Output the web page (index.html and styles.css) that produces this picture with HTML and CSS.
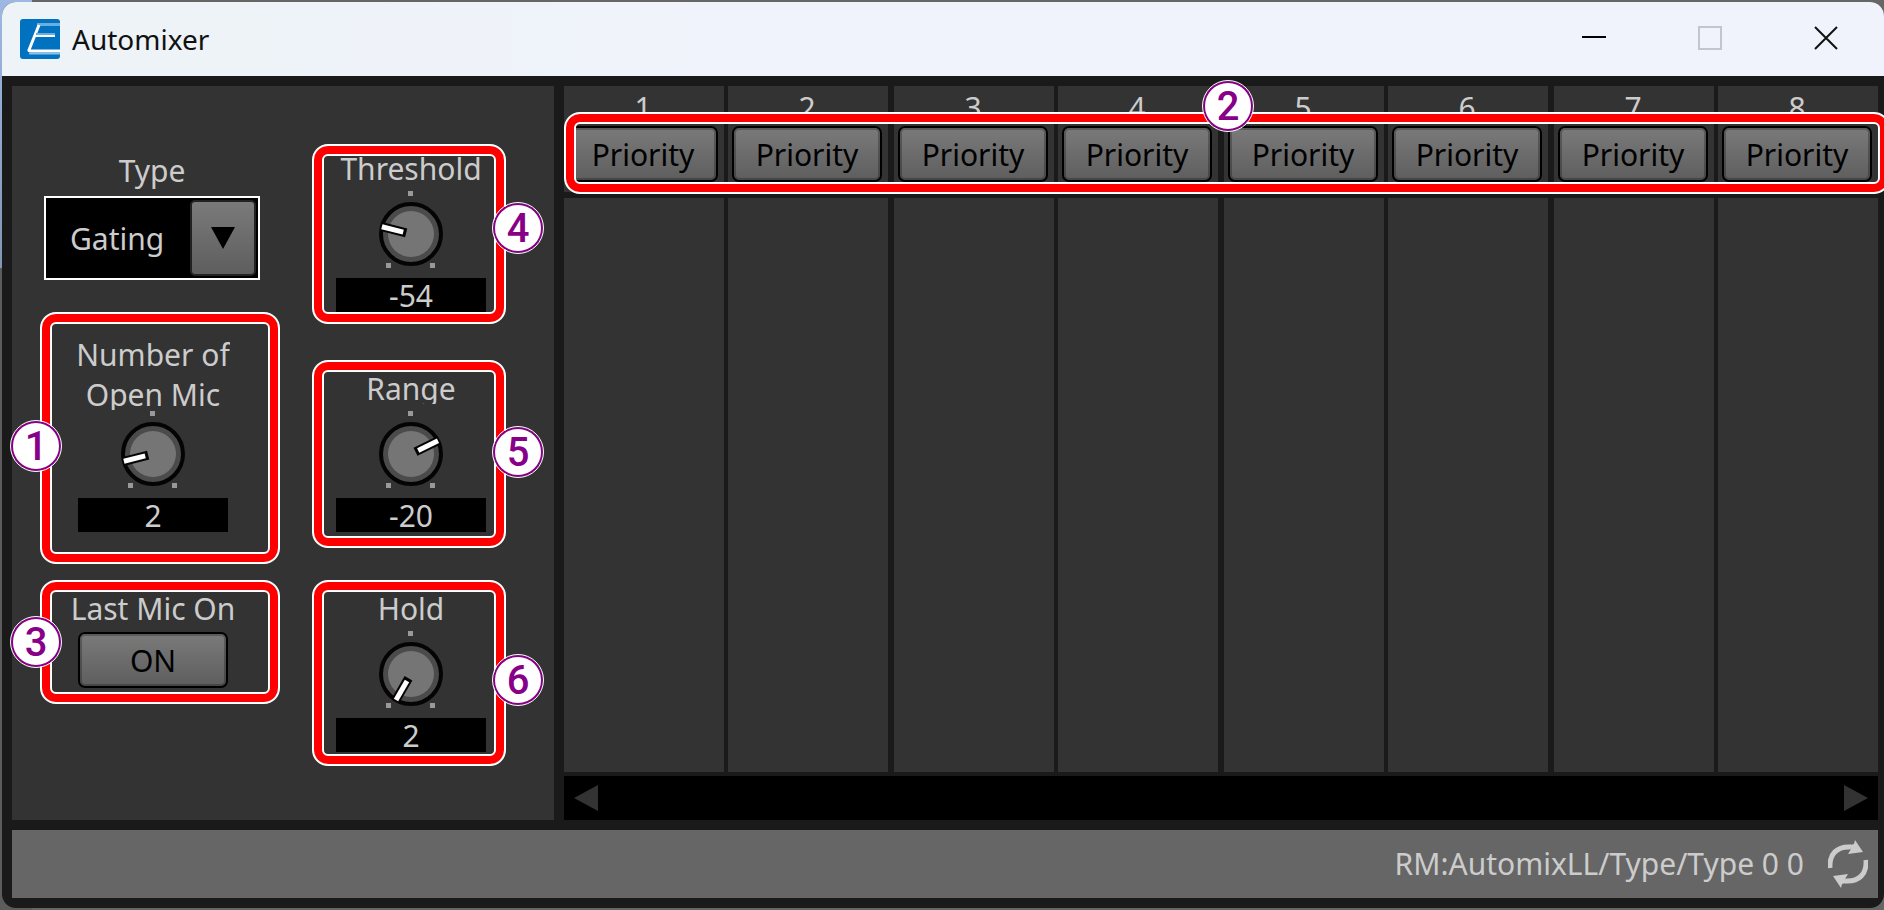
FILE: index.html
```html
<!DOCTYPE html>
<html lang="en">
<head>
    <meta charset="UTF-8">
    <meta name="viewport" content="width=device-width, initial-scale=1.0">
    <title>Automixer</title>
    <link rel="stylesheet" href="styles.css">
</head>
<body>
    <!-- Shared dial drawing, the pointer is added per knob -->
    <svg class="defs" aria-hidden="true">
        <symbol id="dial" viewBox="0 0 150 94">
            <rect x="72" y="7" width="5" height="5" fill="#999" />
            <rect x="50" y="79" width="5" height="5" fill="#999" />
            <rect x="94" y="79" width="5" height="5" fill="#999" />
            <circle cx="75" cy="50" r="30" fill="#4b4b4b" stroke="#050303" stroke-width="4" />
            <circle cx="75" cy="50" r="23" fill="#757575" />
        </symbol>
        <symbol id="pointer" viewBox="0 0 150 94">
            <rect x="70.500" y="21" width="9" height="24" fill="#050303" />
            <rect x="72.500" y="20" width="5" height="22" fill="#fff" />
        </symbol>
    </svg>

    <div class="window">
        <header class="titlebar">
            <svg class="logo" viewBox="0 0 40 40" aria-hidden="true">
                <rect width="40" height="40" rx="3" fill="#0072c0" />
                <path d="M17 5.500H40" stroke="#6aaedd" stroke-width="3" fill="none" />
                <path d="M19 6L9 31Q8.500 32 11 32H40" stroke="#fff" stroke-width="3" fill="none" />
                <path d="M16 15H35" stroke="#6aaedd" stroke-width="2" fill="none" />
                <path d="M15 17H35" stroke="#fff" stroke-width="2" fill="none" />
                <path d="M9 34.500H40" stroke="#8cc2e6" stroke-width="2" fill="none" />
            </svg>
            <h1>Automixer</h1>
            <div class="window-controls">
                <button type="button" aria-label="Minimize">
                    <svg viewBox="0 0 24 24"><path d="M0 11H24" stroke="#000" stroke-width="2" /></svg>
                </button>
                <button type="button" aria-label="Maximize" disabled>
                    <svg viewBox="0 0 24 24"><rect x="1" y="1" width="22" height="22" fill="none" stroke="#c3c5ca" stroke-width="2" /></svg>
                </button>
                <button type="button" aria-label="Close">
                    <svg viewBox="0 0 24 24"><path d="M1 1L23 23M23 1L1 23" stroke="#111" stroke-width="2" /></svg>
                </button>
            </div>
        </header>

        <main class="content">
            <section class="settings">
                <div class="settings-column">
                    <div class="field">
                        <label class="caption" for="type">Type</label>
                        <div class="select-box">
                            <select id="type">
                                <option>Gating</option>
                            </select>
                            <span class="select-arrow">
                                <svg viewBox="0 0 24 22"><path d="M0 0H24L12 22Z" /></svg>
                            </span>
                        </div>
                    </div>

                    <div class="control control-mics">
                        <label class="caption caption-double" for="mics">Number of<br>Open Mic</label>
                        <div class="knob">
                            <svg viewBox="0 0 150 94">
                                <use href="#dial" />
                                <use href="#pointer" transform="rotate(-104 75 50)" />
                            </svg>
                            <input type="range" id="mics" min="1" max="8" value="2">
                        </div>
                        <output class="value" for="mics">2</output>
                        <div class="callout callout-1"><span class="badge">1</span></div>
                    </div>

                    <div class="control">
                        <span class="caption" id="lastMic">Last Mic On</span>
                        <button type="button" class="btn btn-on" aria-describedby="lastMic">ON</button>
                        <div class="callout callout-3"><span class="badge">3</span></div>
                    </div>
                </div>

                <div class="settings-column">
                    <div class="control">
                        <label class="caption" for="threshold">Threshold</label>
                        <div class="knob">
                            <svg viewBox="0 0 150 94">
                                <use href="#dial" />
                                <use href="#pointer" transform="rotate(-76 75 50)" />
                            </svg>
                            <input type="range" id="threshold" min="-72" max="0" value="-54">
                        </div>
                        <output class="value" for="threshold">-54</output>
                        <div class="callout callout-4"><span class="badge">4</span></div>
                    </div>

                    <div class="control">
                        <label class="caption caption-clip" for="range">Range</label>
                        <div class="knob">
                            <svg viewBox="0 0 150 94">
                                <use href="#dial" />
                                <use href="#pointer" transform="rotate(64 75 50)" />
                            </svg>
                            <input type="range" id="range" min="-70" max="0" value="-20">
                        </div>
                        <output class="value" for="range">-20</output>
                        <div class="callout callout-5"><span class="badge">5</span></div>
                    </div>

                    <div class="control">
                        <label class="caption" for="hold">Hold</label>
                        <div class="knob">
                            <svg viewBox="0 0 150 94">
                                <use href="#dial" />
                                <use href="#pointer" transform="rotate(-150 75 50)" />
                            </svg>
                            <input type="range" id="hold" min="2" max="2000" value="2">
                        </div>
                        <output class="value" for="hold">2</output>
                        <div class="callout callout-6"><span class="badge">6</span></div>
                    </div>
                </div>
            </section>

            <section class="mixer">
                <div class="channels">
                    <div class="pair">
                        <div class="channel">
                            <div class="channel-head"><span>1</span><button type="button" class="btn">Priority</button></div>
                            <div class="channel-body"></div>
                        </div>
                        <div class="channel">
                            <div class="channel-head"><span>2</span><button type="button" class="btn">Priority</button></div>
                            <div class="channel-body"></div>
                        </div>
                    </div>
                    <div class="pair">
                        <div class="channel">
                            <div class="channel-head"><span>3</span><button type="button" class="btn">Priority</button></div>
                            <div class="channel-body"></div>
                        </div>
                        <div class="channel">
                            <div class="channel-head"><span>4</span><button type="button" class="btn">Priority</button></div>
                            <div class="channel-body"></div>
                        </div>
                    </div>
                    <div class="pair">
                        <div class="channel">
                            <div class="channel-head"><span>5</span><button type="button" class="btn">Priority</button></div>
                            <div class="channel-body"></div>
                        </div>
                        <div class="channel">
                            <div class="channel-head"><span>6</span><button type="button" class="btn">Priority</button></div>
                            <div class="channel-body"></div>
                        </div>
                    </div>
                    <div class="pair">
                        <div class="channel">
                            <div class="channel-head"><span>7</span><button type="button" class="btn">Priority</button></div>
                            <div class="channel-body"></div>
                        </div>
                        <div class="channel">
                            <div class="channel-head"><span>8</span><button type="button" class="btn">Priority</button></div>
                            <div class="channel-body"></div>
                        </div>
                    </div>
                </div>
                <div class="scrollbar">
                    <button type="button" aria-label="Scroll left">
                        <svg viewBox="0 0 24 26"><path d="M24 0V26L0 13Z" /></svg>
                    </button>
                    <button type="button" aria-label="Scroll right">
                        <svg viewBox="0 0 24 26"><path d="M0 0V26L24 13Z" /></svg>
                    </button>
                </div>
                <div class="callout callout-2"><span class="badge">2</span></div>
            </section>
        </main>

        <footer class="statusbar">
            <span>RM:AutomixLL/Type/Type 0 0</span>
            <svg viewBox="0 0 40 48" aria-hidden="true">
                <path d="M2 28C1 14 9 6 23 7" fill="none" stroke="#ccc" stroke-width="5" />
                <path d="M27 0L35 12L20 14L23 9L22 5L26 4Z" fill="#ccc" />
                <path d="M38 20C39 34 31 42 17 41" fill="none" stroke="#ccc" stroke-width="5" />
                <path d="M13 48L5 36L20 34L17 39L18 43L14 44Z" fill="#ccc" />
            </svg>
        </footer>
    </div>
</body>
</html>
```

FILE: styles.css
```css
* {
    box-sizing: border-box;
}

/* General Styling */
body {
    margin: 0;
    padding: 2px 0 2px 2px;
    min-height: 100vh;
    display: flex;
    overflow: hidden;
    font-family: "Noto Sans", sans-serif;
    font-size: 30px;
    line-height: 40px;
    color: #ccc;
    background: linear-gradient(#9db8e2, #8296b4 268px, #5c5c5c 268px) left / 32px 100% no-repeat #666;
}

button, select, input {
    font: inherit;
    margin: 0;
}

.defs {
    position: absolute;
    width: 0;
    height: 0;
}

/* Window */
.window {
    flex: 1;
    min-width: 0;
    display: flex;
    flex-direction: column;
    overflow: hidden;
    border-radius: 14px;
    background-color: #1a1a1a;
}

.titlebar {
    display: flex;
    align-items: center;
    height: 74px;
    padding-left: 18px;
    background: linear-gradient(90deg, #edf3f7, #f0f3fb 40%);
}

.logo {
    width: 40px;
    height: 40px;
    margin-right: 12px;
}

h1 {
    margin: 0;
    flex: 1;
    font-size: 28px;
    font-weight: 400;
    color: #111;
}

.window-controls {
    display: flex;
    align-self: stretch;
}

.window-controls button {
    display: flex;
    align-items: center;
    justify-content: center;
    width: 116px;
    padding: 0 0 2px;
    border: 0;
    background: none;
}

.window-controls svg {
    width: 24px;
    height: 24px;
}

/* Content */
.content {
    flex: 1;
    display: flex;
    gap: 10px;
    padding: 10px 6px 10px 10px;
}

.settings {
    display: grid;
    grid-template-columns: 218px 150px;
    column-gap: 74px;
    width: 542px;
    padding: 62px 0 0 32px;
    background-color: #333;
}

.field {
    width: 216px;
    padding-top: 2px;
}

.caption {
    display: block;
    height: 36px;
    padding-top: 1px;
    text-align: center;
    white-space: nowrap;
}

/* The descenders end at the dial */
.caption-clip,
.caption-double {
    overflow: hidden;
}

.caption-double {
    height: 76px;
    margin-bottom: -6px;
}

.select-box {
    position: relative;
    margin-top: 10px;
}

.select-box select {
    appearance: none;
    display: block;
    width: 100%;
    height: 84px;
    padding: 2px 70px 0 24px;
    border: 2px solid #fff;
    border-radius: 0;
    background-color: #000;
    color: #ccc;
}

.select-arrow {
    position: absolute;
    top: 4px;
    right: 4px;
    bottom: 4px;
    width: 66px;
    display: flex;
    align-items: center;
    justify-content: center;
    border: 2px solid #222;
    border-radius: 5px;
    background: linear-gradient(#7a7a7a, #5e5e5e);
    pointer-events: none;
}

.select-arrow svg {
    width: 24px;
    height: 22px;
}

/* Knobs and buttons */
.control {
    position: relative;
    display: flex;
    flex-direction: column;
    align-items: center;
}

.control + .control {
    margin-top: 56px;
}

.control-mics {
    margin-top: 54px;
}

.knob {
    position: relative;
    width: 150px;
    height: 94px;
}

.knob svg {
    display: block;
    width: 100%;
    height: 100%;
}

.knob input {
    position: absolute;
    inset: 0;
    width: 100%;
    height: 100%;
    opacity: 0;
}

.value {
    width: 150px;
    height: 34px;
    line-height: 36px;
    text-align: center;
    background-color: #000;
}

.btn {
    width: 150px;
    height: 56px;
    padding: 2px 0 0;
    border: 2px solid #000;
    border-radius: 7px;
    background: linear-gradient(#7a7a7a, #5e5e5e);
    box-shadow: inset 0 0 0 2px rgba(0, 0, 0, 0.25);
    color: #000;
}

.btn-on {
    margin-top: 8px;
}

/* Mixer */
.mixer {
    position: relative;
    flex: 1;
    display: flex;
    flex-direction: column;
    gap: 4px;
}

.channels {
    flex: 1;
    display: grid;
    grid-template-columns: repeat(4, 1fr);
    gap: 6px;
}

.pair {
    display: grid;
    grid-template-columns: 1fr 1fr;
    gap: 4px;
}

.channel {
    display: flex;
    flex-direction: column;
    gap: 6px;
}

.channel-head {
    display: flex;
    flex-direction: column;
    padding: 2px 6px 10px 4px;
    text-align: center;
    background-color: #333;
}

.channel-head span {
    height: 38px;
}

.channel-head .btn {
    width: 100%;
}

.channel-body {
    flex: 1;
    background-color: #333;
}

.scrollbar {
    display: flex;
    justify-content: space-between;
    height: 44px;
    padding: 0 10px;
    background-color: #000;
}

.scrollbar button {
    display: flex;
    align-items: center;
    padding: 0;
    border: 0;
    background: none;
}

.scrollbar svg {
    width: 24px;
    height: 26px;
    fill: #333;
}

/* Status bar */
.statusbar {
    display: flex;
    align-items: center;
    justify-content: flex-end;
    gap: 24px;
    height: 68px;
    margin: 0 6px 10px 10px;
    padding-right: 10px;
    background-color: #666;
}

.statusbar svg {
    width: 40px;
    height: 48px;
}

/* Callouts */
.callout {
    position: absolute;
    border: 2px solid #fff;
    border-radius: 16px;
    box-shadow: inset 0 0 0 8px #f00, inset 0 0 0 10px #fff;
    pointer-events: none;
}

.badge {
    position: absolute;
    width: 50px;
    height: 50px;
    border: 2px solid #808;
    border-radius: 50%;
    outline: 1px solid #fff;
    background-color: #fff;
    color: #808;
    font-family: Roboto, sans-serif;
    font-size: 40px;
    font-weight: 500;
    line-height: 48px;
    text-align: center;
}

.callout-1 {
    inset: -22px -18px -32px -4px;
}

.callout-3 {
    inset: -8px -18px -16px -4px;
}

.callout-4 {
    inset: -4px -20px -12px -24px;
}

.callout-5 {
    inset: -8px -20px -16px -24px;
}

.callout-6 {
    inset: -8px -20px -14px -24px;
}

.callout-2 {
    top: 26px;
    left: 0;
    right: -12px;
    height: 82px;
}

.callout-1 .badge {
    top: 107px;
    left: -31px;
}

.callout-3 .badge {
    top: 35px;
    left: -31px;
}

.callout-4 .badge {
    top: 57px;
    right: -39px;
}

.callout-5 .badge {
    top: 65px;
    right: -39px;
}

.callout-6 .badge {
    top: 73px;
    right: -39px;
}

.callout-2 .badge {
    top: -33px;
    left: 50%;
    margin-left: -24px;
}
```
